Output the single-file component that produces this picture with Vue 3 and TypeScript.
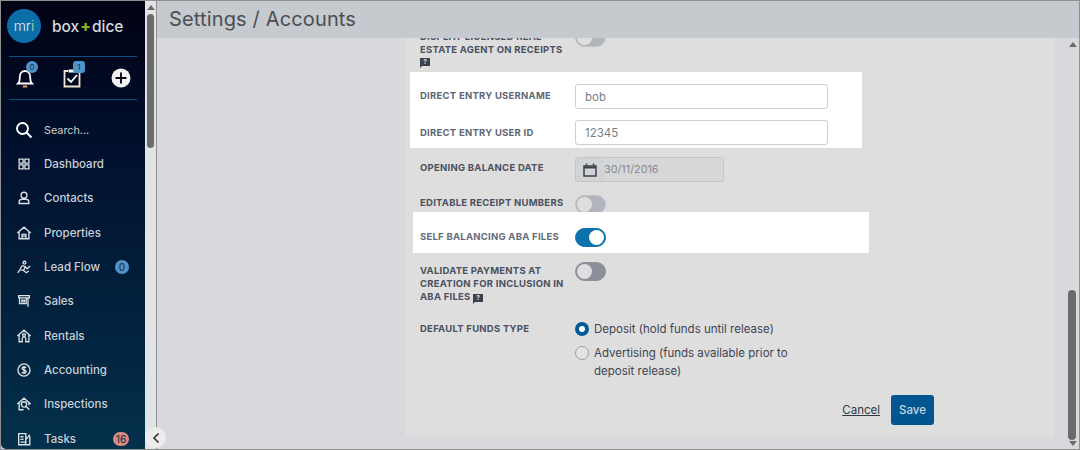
<script setup lang="ts">
interface NavItem {
  label: string;
  icon: string;
  badge?: string;
  badgeClass?: string;
}

const navItems: NavItem[] = [
  { label: 'Dashboard', icon: 'M3.500 3.500h4.500v4.500H3.500zM10 3.500h4.500v4.500H10zM3.500 10h4.500v4.500H3.500zM10 10h4.500v4.500H10z' },
  { label: 'Contacts', icon: 'M9 2.500a3.300 3.300 0 1 1 0 6.600a3.300 3.300 0 0 1 0-6.600zM3.500 15.200v-1.600c0-2 1.600-3.200 3.400-3.200h4.200c1.800 0 3.400 1.200 3.400 3.200v1.600z' },
  { label: 'Properties', icon: 'M1.500 9L9 2.500L16.500 9M3.500 8v7.500h11V8M6.800 15.500v-5h4.400v5M6.800 12.500h4.400' },
  { label: 'Lead Flow', icon: 'M9.500 2.500a1.600 1.600 0 1 1 0 3.200a1.600 1.600 0 0 1 0-3.200zM2 15.500l2.500-3.500l4 1l2-4.500l-3.500-1l-2.500 3.500M10.500 8.500l2 2.500l3.500-3M8.500 13l3 2.500l3-2', badge: '0', badgeClass: 'badge-blue' },
  { label: 'Sales', icon: 'M3 3h12v2.500H3zM4 5.500v6.500h7.500V5.500M13.500 5.500v10M6.500 8h3v2h-3z' },
  { label: 'Rentals', icon: 'M1.500 9L9 2.500L16.500 9M3.500 8v7.500h3.500v-3.500a2 2 0 0 1 4 0v3.500h3.500V8M9 6.500a1.500 1.500 0 1 1 0 3a1.500 1.500 0 0 1 0-3z' },
  { label: 'Accounting', icon: 'M9 2.200a6.800 6.800 0 1 1 0 13.600a6.800 6.800 0 0 1 0-13.600zM11.200 6.600c-.5-.8-1.200-1-2.200-1c-1.200 0-2.200.6-2.200 1.700c0 2.400 4.500 1 4.500 3.400c0 1.100-1 1.700-2.300 1.700c-1 0-1.800-.3-2.300-1.100M9 4.500v9' },
  { label: 'Inspections', icon: 'M1.500 9L9 2.500L16.500 9M3.500 8v7.500h5M14.500 8v2.500M9 6.500a3 3 0 1 1 0 6a3 3 0 0 1 0-6zM11.200 11.500l3.800 4' },
  { label: 'Tasks', icon: 'M3 3h8v12.500H3zM11 15.500h4.500V6M5 6.500h3.500M5 9.500h3.500M5 12.500h6M10.500 7l1.500 1.500L15.500 4', badge: '16', badgeClass: 'badge-red' },
];
</script>

<template>
  <div class="app">
    <aside class="sidebar">
      <div class="brand">
        <div class="brand-mark">mr<span class="mark-i">i</span></div>
        <div class="brand-name">box<span class="plus">+</span>dice</div>
      </div>
      <div class="quick">
        <span class="quick-btn">
          <svg width="20" height="22" viewBox="0 0 20 22" fill="none" stroke="#fff" stroke-width="1.800">
            <path d="M3 16.500c1.600-1.500 1.800-3 1.800-6.500c0-3.500 2.200-6 5.200-6s5.200 2.500 5.200 6c0 3.500.2 5 1.800 6.500z" />
            <path d="M7.800 19.500h4.400" stroke="#e8a070" />
          </svg>
          <span class="quick-badge round">0</span>
        </span>
        <span class="quick-btn">
          <svg width="20" height="22" viewBox="0 0 20 22" fill="none" stroke="#fff" stroke-width="1.800">
            <path d="M6 4H2.500v15.500h15V4H14" stroke="#f0e4d0" />
            <path d="M6.500 2.500h7v3h-7z" fill="#fff" stroke="none" />
            <path d="M5.500 11.500l3.500 3.500l6-7" />
          </svg>
          <span class="quick-badge square">1</span>
        </span>
        <span class="quick-btn add">
          <svg width="20" height="20" viewBox="0 0 20 20">
            <circle cx="10" cy="10" r="9.500" fill="#f2f2f2" />
            <path d="M10 4.500v11M4.500 10h11" stroke="#0a0a1e" stroke-width="1.900" />
          </svg>
        </span>
      </div>
      <div class="search">
        <svg class="search-icon" width="18" height="18" viewBox="0 0 18 18" fill="none" stroke="#fff" stroke-width="1.900">
          <circle cx="7.500" cy="7.500" r="5.500" />
          <path d="M11.500 11.500l5 5" />
        </svg>
        <span>Search...</span>
      </div>
      <nav class="nav">
        <a v-for="item in navItems" :key="item.label" class="nav-item">
          <svg class="nav-icon" width="16" height="16" viewBox="0 0 18 18" fill="none" stroke="#dce1e6" stroke-width="1.500">
            <path :d="item.icon" />
          </svg>
          <span class="nav-label">{{ item.label }}</span>
          <span v-if="item.badge" class="nav-badge" :class="item.badgeClass">{{ item.badge }}</span>
        </a>
      </nav>
    </aside>

    <div class="side-scroll">
      <span class="arrow up"></span>
      <span class="side-thumb"></span>
      <button class="collapse">
        <svg width="10" height="12" viewBox="0 0 10 12" fill="none" stroke="#333" stroke-width="1.600">
          <path d="M7.500 1.500L3 6l4.500 4.500" />
        </svg>
      </button>
    </div>

    <div class="main">
      <header class="topbar">Settings / Accounts</header>
      <div class="body">
        <section class="card">
          <div class="form">
            <div class="row row-display">
              <label class="label">Display licensed real estate agent on receipts
                <span class="help block">?</span>
              </label>
              <span class="toggle light"><i></i></span>
            </div>

            <div class="spot spot-entry">
              <div class="row row-user">
                <label class="label mid">Direct entry username</label>
                <input class="field" value="bob" />
              </div>
              <div class="row row-id">
                <label class="label mid">Direct entry user ID</label>
                <input class="field" value="12345" />
              </div>
            </div>

            <div class="row row-date">
              <label class="label">Opening balance date</label>
              <div class="date">
                <span class="date-addon">
                  <svg width="14" height="14" viewBox="0 0 14 14" fill="none" stroke="#3c424c" stroke-width="1.500">
                    <path d="M1 3h12v10H1zM3.500 .5v3M10.500 .5v3" />
                    <path d="M1 4.500h12" stroke-width="2" />
                  </svg>
                </span>
                <span class="date-value">30/11/2016</span>
              </div>
            </div>

            <div class="row row-edit">
              <label class="label">Editable receipt numbers</label>
              <span class="toggle light"><i></i></span>
            </div>

            <div class="spot spot-aba">
              <label class="label lighter">Self balancing ABA files</label>
              <span class="toggle on"><i></i></span>
            </div>

            <div class="row row-validate">
              <label class="label">Validate payments at creation for inclusion in ABA files <span class="help">?</span></label>
              <span class="toggle dark"><i></i></span>
            </div>

            <div class="row row-funds">
              <label class="label funds-label">Default funds type</label>
              <div class="radios">
                <div class="radio-row">
                  <span class="radio checked"></span>
                  <span>Deposit (hold funds until release)</span>
                </div>
                <div class="radio-row">
                  <span class="radio"></span>
                  <span>Advertising (funds available prior to<br />deposit release)</span>
                </div>
              </div>
            </div>

            <div class="actions">
              <a class="cancel">Cancel</a>
              <button class="save">Save</button>
            </div>
          </div>
        </section>
        <div class="page-scroll">
          <span class="arrow up"></span>
          <span class="page-thumb"></span>
          <span class="arrow down"></span>
        </div>
      </div>
    </div>
  </div>
</template>

<style>
html,
body {
  margin: 0;
  background: #d8d9dc;
  overflow: hidden;
}
</style>

<style scoped>
.app {
  display: flex;
  width: 1080px;
  height: 450px;
  box-sizing: border-box;
  border: 1px solid #8f9191;
  overflow: hidden;
  font-family: Inter, "Open Sans", sans-serif;
  background: #d8d9dc;
}

.sidebar {
  width: 144px;
  flex: none;
  display: flex;
  flex-direction: column;
  color: #c9d0d8;
  background: linear-gradient(180deg, #020214 0%, #01112f 35%, #03304b 100%);
  border-bottom-left-radius: 5px;
  overflow: hidden;
}

.brand {
  display: flex;
  flex: none;
  align-items: center;
  gap: 11px;
  margin: 0 8px;
  height: 56px;
  box-sizing: border-box;
  border-bottom: 1px solid #0a4f80;
}

.brand-mark {
  width: 34px;
  height: 34px;
  margin-left: -2px;
  margin-top: -5px;
  border-radius: 50%;
  background: #0b6ea8;
  color: #e8f0f4;
  font-size: 14px;
  font-weight: 300;
  line-height: 33px;
  text-align: center;
  flex: none;
}

.mark-i {
  color: #b8dca0;
}

.brand-name {
  font-size: 15.500px;
  font-weight: 500;
  color: #d5d8dc;
  margin-top: -5px;
}

.plus {
  color: #8cb21e;
  font-weight: 800;
  margin: 0 1px;
}

.quick {
  display: flex;
  flex: none;
  align-items: center;
  gap: 27px;
  margin: 0 8px;
  padding-left: 6px;
  height: 43px;
  box-sizing: border-box;
  border-bottom: 1px solid #0a4f80;
}

.quick-btn {
  position: relative;
  display: flex;
}

.quick-btn.add {
  margin-left: 2px;
}

.quick-badge {
  position: absolute;
  top: -6px;
  left: 11px;
  width: 12px;
  height: 12px;
  background: #4f94c8;
  color: #12304c;
  font-size: 8px;
  line-height: 12px;
  text-align: center;
}

.quick-badge.round {
  border-radius: 50%;
}

.quick-badge.square {
  border-radius: 3px;
}

.search {
  display: flex;
  flex: none;
  align-items: center;
  height: 60px;
  font-size: 10.800px;
}

.search-icon {
  margin: 0 11px 0 14px;
}

.nav {
  display: flex;
  flex-direction: column;
  margin-top: -13px;
}

.nav-item {
  display: flex;
  align-items: center;
  height: 34.300px;
  flex: none;
  font-size: 11.500px;
  font-weight: 500;
}

.nav-icon {
  margin: 0 12px 0 15px;
  flex: none;
}

.nav-label {
  flex: 1;
}

.nav-badge {
  flex: none;
  height: 14px;
  line-height: 14px;
  border-radius: 7px;
  font-size: 10px;
  text-align: center;
  color: #2a3a4c;
  margin-right: 16px;
}

.badge-blue {
  width: 14px;
  background: #4f94c8;
}

.badge-red {
  width: 16px;
  background: #d98a80;
}

.side-scroll {
  position: relative;
  width: 11px;
  flex: none;
  background: #e2e3e4;
  border-right: 1px solid #8f9191;
}

.side-thumb {
  position: absolute;
  top: 13px;
  left: 2px;
  width: 7px;
  height: 134px;
  border-radius: 4px;
  background: #6b6b6b;
}

.arrow {
  position: absolute;
  left: 50%;
  margin-left: -4px;
  width: 0;
  height: 0;
  border-left: 4px solid transparent;
  border-right: 4px solid transparent;
}

.arrow.up {
  top: 4px;
  border-bottom: 5px solid #6b6b6b;
}

.arrow.down {
  bottom: 3px;
  border-top: 5px solid #6b6b6b;
}

.collapse {
  position: absolute;
  top: 426px;
  left: 0;
  width: 21px;
  height: 21px;
  padding: 0;
  border: none;
  border-radius: 50%;
  background: #ececec;
  display: flex;
  align-items: center;
  justify-content: center;
  z-index: 2;
}

.main {
  flex: 1;
  min-width: 0;
  display: flex;
  flex-direction: column;
}

.topbar {
  height: 37px;
  flex: none;
  padding-left: 12px;
  background: #c6c9cd;
  color: #4a4f55;
  font-size: 20px;
  line-height: 36px;
  letter-spacing: 0.15px;
}

.body {
  flex: 1;
  min-height: 0;
  display: flex;
  justify-content: flex-end;
  background: #d8d9dc;
}

.card {
  width: 649px;
  height: 399px;
  margin-right: 12px;
  background: #dedede;
  overflow: hidden;
}

.form {
  margin-top: -10px;
  padding-left: 15px;
}

.row {
  display: flex;
  align-items: flex-start;
}

.label {
  display: block;
  width: 155px;
  flex: none;
  padding-right: 6px;
  box-sizing: border-box;
  font-size: 9.500px;
  font-weight: 700;
  line-height: 12.500px;
  text-transform: uppercase;
  letter-spacing: 0.25px;
  color: #4a5160;
}

.label.mid {
  color: #5f6777;
}

.label.lighter {
  color: #646b7a;
}

.help {
  position: relative;
  display: inline-block;
  width: 10px;
  height: 8px;
  margin-bottom: 1px;
  background: #3c424c;
  color: #ddd;
  font-size: 6.500px;
  line-height: 8px;
  text-align: center;
  letter-spacing: 0;
}

.help::after {
  content: "";
  position: absolute;
  left: 0;
  bottom: -2px;
  border-top: 2px solid #3c424c;
  border-right: 2px solid transparent;
}

.help.block {
  display: block;
  margin-top: 2px;
}

.row-display {
  height: 44px;
}

.row-display .label {
  padding-top: 3px;
}

.spot {
  position: relative;
  z-index: 1;
  background: #fff;
}

.spot-entry {
  width: 452px;
  height: 76px;
  margin-left: -10px;
  padding-left: 10px;
  box-sizing: border-box;
}

.row-user {
  padding-top: 12px;
  height: 25px;
  align-items: center;
}

.row-id {
  margin-top: 11px;
  height: 25px;
  align-items: center;
}

.row-id .label {
  margin-top: 1px;
}

.field {
  width: 253px;
  height: 25px;
  box-sizing: border-box;
  padding: 0 8px 0 9px;
  border: 1px solid #ccced2;
  border-radius: 3px;
  background: #fff;
  color: #7a7e85;
  font: 400 11.500px Inter, "Open Sans", sans-serif;
  outline: none;
}

.row-date {
  margin-top: 9px;
  height: 25px;
}

.row-date .label {
  padding-top: 5px;
}

.date {
  display: flex;
  width: 149px;
  height: 25px;
  box-sizing: border-box;
  border: 1px solid #c3c5c7;
  border-radius: 3px;
  background: #d6d7d8;
}

.date-addon {
  width: 28px;
  display: flex;
  align-items: center;
  justify-content: center;
  background: #d2d3d4;
}

.date-value {
  line-height: 23px;
  font-size: 10.800px;
  color: #898b8e;
}

.row-edit {
  margin-top: 13px;
  height: 17px;
}

.row-edit .label {
  padding-top: 2px;
}

.spot-aba {
  display: flex;
  align-items: center;
  width: 456px;
  height: 41px;
  margin-left: -7px;
  padding: 10px 0 0 7px;
  box-sizing: border-box;
}

.toggle {
  display: block;
  position: relative;
  width: 31px;
  height: 19px;
  flex: none;
  border-radius: 10px;
  box-sizing: border-box;
  border: 1px solid #c0c2c6;
  background: #b2b5bb;
}

.toggle i {
  position: absolute;
  top: 1px;
  left: 1px;
  width: 15px;
  height: 15px;
  border-radius: 50%;
  background: #dedede;
}

.toggle.dark {
  background: #8b8f99;
  border-color: #8b8f99;
}

.toggle.on {
  background: #0b72ac;
  border-color: #0b72ac;
}

.toggle.on i {
  left: 13px;
  background: #fff;
}

.row-validate {
  margin-top: 9px;
  height: 51px;
}

.row-validate .label {
  padding-top: 2px;
  line-height: 13px;
}

.row-funds {
  margin-top: 7px;
}

.funds-label {
  padding-top: 3px;
}

.radios {
  display: flex;
  flex-direction: column;
  gap: 6px;
  font-size: 11.500px;
  line-height: 18px;
  color: #3e4552;
}

.radio-row {
  display: flex;
  gap: 5px;
}

.radio {
  width: 14px;
  height: 14px;
  flex: none;
  margin-top: 2px;
  box-sizing: border-box;
  border: 1px solid #9c9ea2;
  border-radius: 50%;
  background: #e4e4e4;
}

.radio.checked {
  background: #fff;
  border: 4px solid #005a97;
}

.actions {
  display: flex;
  align-items: center;
  justify-content: flex-end;
  gap: 11px;
  width: 514px;
  margin-top: 15px;
}

.cancel {
  color: #333a45;
  font-size: 11.500px;
  text-decoration: underline;
}

.save {
  width: 43px;
  height: 30px;
  padding: 0;
  border: none;
  border-radius: 3px;
  background: #00568f;
  color: #c8d6e0;
  font: 500 11.500px Inter, "Open Sans", sans-serif;
}

.page-scroll {
  position: relative;
  width: 13px;
  flex: none;
  background: #d8d9dc;
}

.page-thumb {
  position: absolute;
  top: 252px;
  left: 2px;
  width: 8px;
  height: 150px;
  border-radius: 4px;
  background: #6b6b6b;
}
</style>
